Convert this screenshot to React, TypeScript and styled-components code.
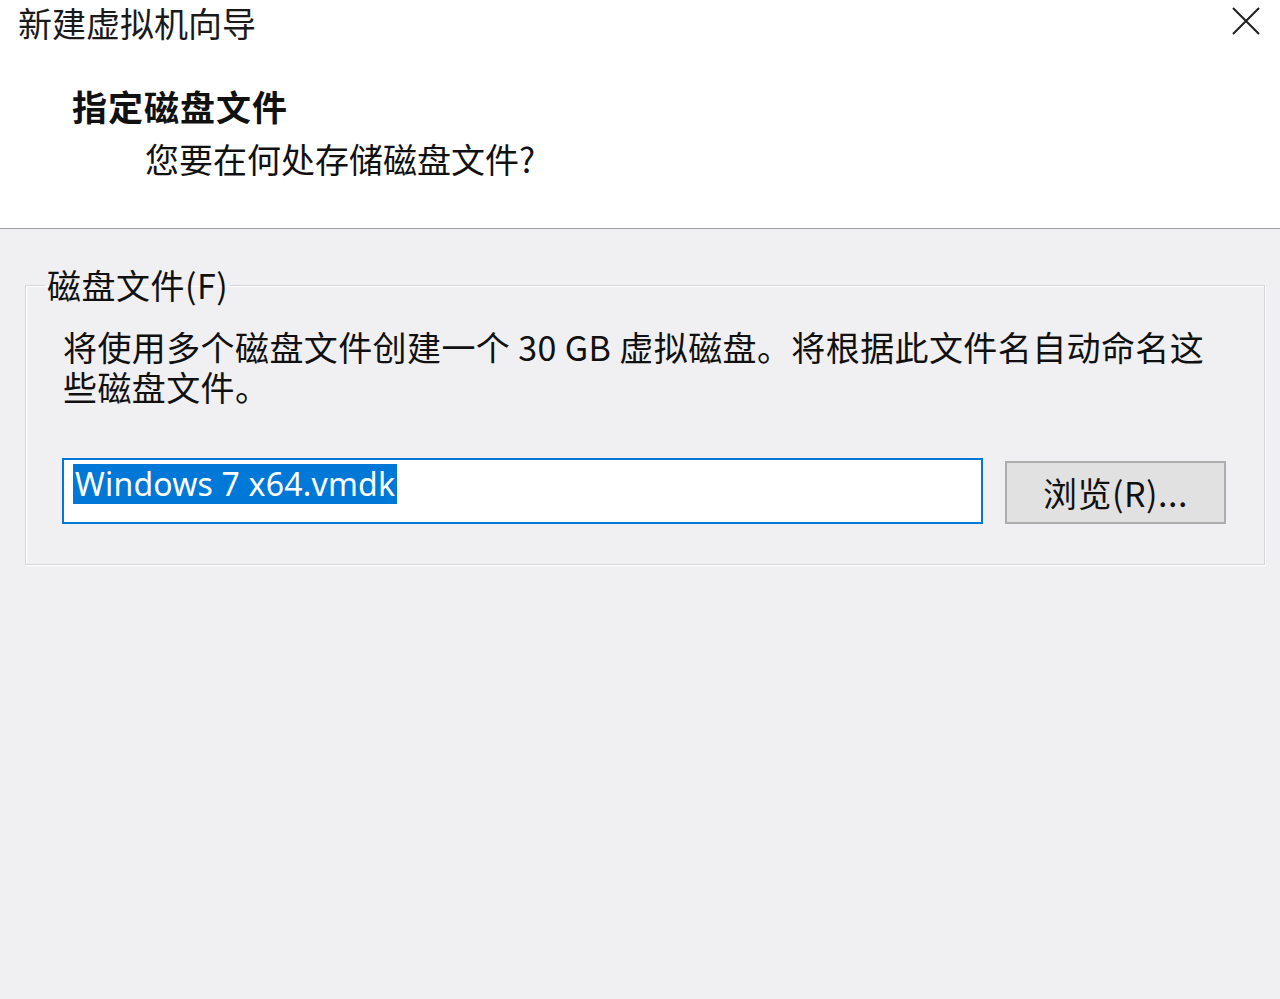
import React from 'react';
import styled, { createGlobalStyle } from 'styled-components';

const GlobalStyle = createGlobalStyle`
  html, body {
    margin: 0;
    padding: 0;
    background: #f0eff2;
  }
  body {
    font-family: "Noto Sans CJK SC", "Noto Sans", sans-serif;
    color: #111;
  }
`;

const Window = styled.div`
  width: 1280px;
  height: 999px;
  background: #f0eff2;
  overflow: hidden;
`;

const Header = styled.header`
  height: 229px;
  background: #ffffff;
  border-bottom: 1px solid #a0a0a0;
  box-sizing: border-box;
`;

const TitleBar = styled.div`
  display: flex;
  justify-content: space-between;
  align-items: flex-start;
  height: 46px;
  padding: 3px 20px 0 18px;
  box-sizing: border-box;
`;

const Title = styled.div`
  font-size: 34px;
  line-height: 40px;
  color: #1a1a1a;
`;

const CloseButton = styled.button`
  border: none;
  background: transparent;
  padding: 0;
  margin-top: 4px;
  width: 28px;
  height: 28px;
  display: flex;
  cursor: pointer;
`;

const Heading = styled.h1<{ $indent: number; $top: number; $bold?: boolean }>`
  margin: ${(p) => p.$top}px 0 0 ${(p) => p.$indent}px;
  font-size: ${(p) => (p.$bold ? 35 : 34)}px;
  line-height: 40px;
  letter-spacing: ${(p) => (p.$bold ? 1 : 0)}px;
  font-weight: ${(p) => (p.$bold ? 700 : 400)};
  color: #111;
`;

const Body = styled.main`
  padding: 36px 15px 0 25px;
`;

const GroupBox = styled.fieldset`
  margin: 0;
  padding: 22px 38px 40px 37px;
  border: 1px solid #d6d4d8;
  box-shadow: inset 1px 1px 0 #ffffff, 1px 1px 0 #ffffff;
  min-width: 0;
`;

const Legend = styled.legend`
  margin-left: -18px;
  padding: 0 2px;
  font-size: 34px;
  line-height: 40px;
  letter-spacing: 0.5px;
  color: #111;
`;

const Description = styled.p`
  margin: 0;
  font-size: 34px;
  line-height: 40px;
  letter-spacing: 0.4px;
  color: #111;
`;

const FileRow = styled.div`
  display: flex;
  align-items: flex-start;
  margin-top: 51px;
  margin-left: -1px;
`;

const PathField = styled.div`
  width: 921px;
  height: 66px;
  box-sizing: border-box;
  border: 2px solid #0078d7;
  background: #ffffff;
  padding: 4px 0 0 9px;
`;

const Selected = styled.span`
  display: inline-block;
  background: #0078d7;
  color: #ffffff;
  font-family: "Noto Sans", "Open Sans", sans-serif;
  font-size: 32px;
  line-height: 40px;
  letter-spacing: 0.2px;
  padding: 0 2px;
`;

const BrowseButton = styled.button`
  margin: 3px 0 0 22px;
  width: 221px;
  height: 63px;
  box-sizing: border-box;
  background: #e1e1e1;
  border: 2px solid #adadad;
  font-family: "Noto Sans CJK SC", "Noto Sans", sans-serif;
  font-size: 34px;
  line-height: 40px;
  letter-spacing: 0.5px;
  color: #111;
  padding: 0;
`;

export default function App() {
  return (
    <Window>
      <GlobalStyle />
      <Header>
        <TitleBar>
          <Title>新建虚拟机向导</Title>
          <CloseButton aria-label="关闭">
            <svg width="28" height="28" viewBox="0 0 28 28">
              <path d="M1 1 L27 27 M27 1 L1 27" stroke="#1e1e1e" strokeWidth="2" fill="none" />
            </svg>
          </CloseButton>
        </TitleBar>
        <Heading $indent={72} $top={40} $bold>
          指定磁盘文件
        </Heading>
        <Heading as="h2" $indent={145} $top={13}>
          您要在何处存储磁盘文件?
        </Heading>
      </Header>
      <Body>
        <GroupBox>
          <Legend>磁盘文件(F)</Legend>
          <Description>
            将使用多个磁盘文件创建一个 30 GB 虚拟磁盘。将根据此文件名自动命名这
            <br />
            些磁盘文件。
          </Description>
          <FileRow>
            <PathField>
              <Selected>Windows 7 x64.vmdk</Selected>
            </PathField>
            <BrowseButton>浏览(R)...</BrowseButton>
          </FileRow>
        </GroupBox>
      </Body>
    </Window>
  );
}
